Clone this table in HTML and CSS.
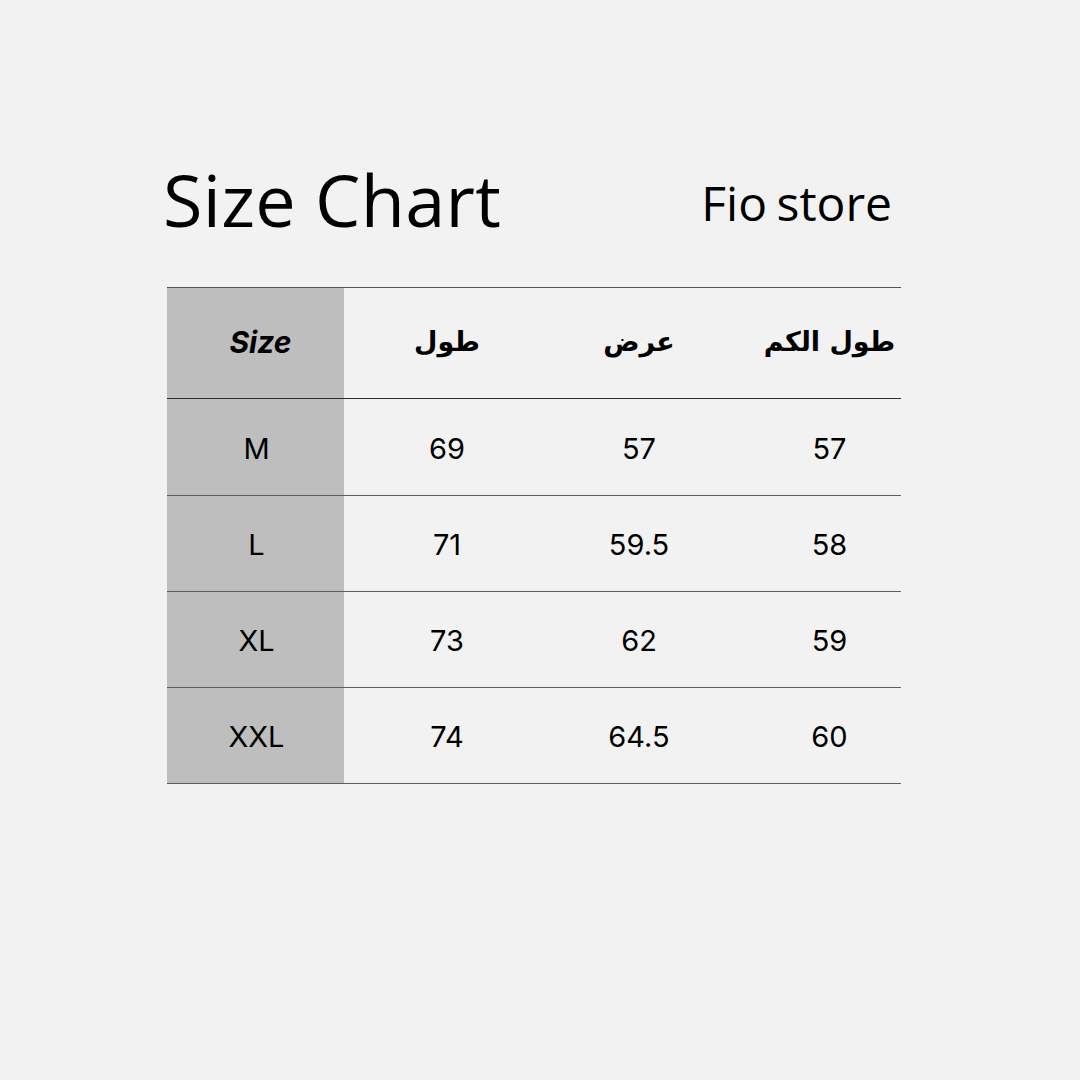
FILE: index.html
```html
<!DOCTYPE html>
<html lang="en">
<head>
<meta charset="utf-8">
<title>Size Chart</title>
<link rel="stylesheet" href="styles.css">
</head>
<body>
<main class="page">
  <header class="top">
    <h1 class="title">Size Chart</h1>
    <div class="brand">Fio store</div>
  </header>
  <section class="chart">
    <div class="row head">
      <div class="cell size-col"><span class="size-label">Size</span></div>
      <div class="cell ar" dir="rtl">طول</div>
      <div class="cell ar" dir="rtl">عرض</div>
      <div class="cell ar last" dir="rtl">طول الكم</div>
    </div>
    <div class="row">
      <div class="cell size-col">M</div>
      <div class="cell">69</div>
      <div class="cell">57</div>
      <div class="cell last">57</div>
    </div>
    <div class="row">
      <div class="cell size-col">L</div>
      <div class="cell">71</div>
      <div class="cell">59.5</div>
      <div class="cell last">58</div>
    </div>
    <div class="row">
      <div class="cell size-col">XL</div>
      <div class="cell">73</div>
      <div class="cell">62</div>
      <div class="cell last">59</div>
    </div>
    <div class="row">
      <div class="cell size-col">XXL</div>
      <div class="cell">74</div>
      <div class="cell">64.5</div>
      <div class="cell last">60</div>
    </div>
  </section>
</main>
</body>
</html>
```
FILE: styles.css
```css
html, body {
  margin: 0;
  padding: 0;
}
body {
  background: #f2f2f2;
  width: 1080px;
  height: 1080px;
  color: #000;
}
.page {
  padding: 164px 0 0 163px;
  width: 738px;
}
.top {
  display: flex;
  justify-content: space-between;
  align-items: flex-start;
  padding-right: 9px;
}
.title {
  margin: 0;
  font-family: "Open Sans", sans-serif;
  font-weight: 400;
  font-size: 72px;
  letter-spacing: 0.3px;
  line-height: 1;
  margin-top: -1px;
}
.brand {
  margin-top: 15px;
  font-family: "Open Sans", sans-serif;
  font-size: 48px;
  line-height: 1;
  word-spacing: -3px;
}
.chart {
  margin: 52px 0 0 4px;
  width: 734px;
  border-top: 1px solid #555;
}
.row {
  display: grid;
  grid-template-columns: 177px 206px 178px 173px;
  height: 95px;
  border-bottom: 1px solid #5e5e5e;
}
.row.head {
  height: 110px;
  border-bottom-color: #2e2e2e;
}
.row.head + .row {
  height: 96px;
}
.cell {
  display: flex;
  align-items: center;
  justify-content: center;
  font-family: "Inter", "Roboto", sans-serif;
  font-size: 29px;
  padding-top: 2px;
  white-space: nowrap;
}
.head .cell {
  padding-top: 0;
  padding-bottom: 3px;
}
.size-col {
  background: #bebebe;
  padding-left: 2px;
}
.last {
  padding-left: 30px;
}
.size-label {
  font-family: "Inter", sans-serif;
  font-weight: 700;
  font-style: italic;
  font-size: 30px;
  margin-left: 8px;
}
.ar {
  font-family: "DejaVu Sans", sans-serif;
  font-weight: 700;
  font-size: 27px;
}
```
